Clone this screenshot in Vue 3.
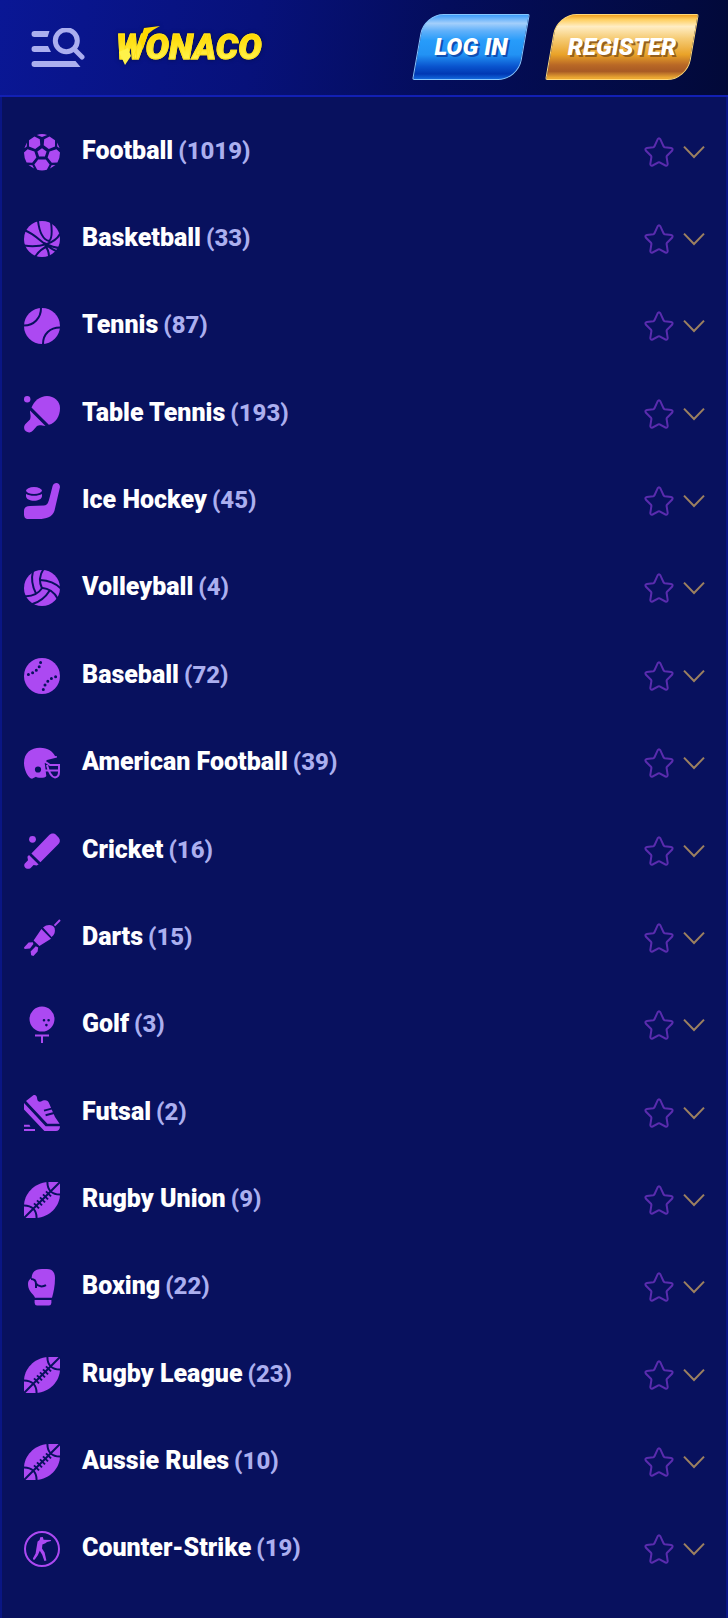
<script setup>
import { ref } from 'vue'

const sports = ref([
  { name: 'Football', count: 1019, icon: 'football', favourite: false },
  { name: 'Basketball', count: 33, icon: 'basketball', favourite: false },
  { name: 'Tennis', count: 87, icon: 'tennis', favourite: false },
  { name: 'Table Tennis', count: 193, icon: 'table-tennis', favourite: false },
  { name: 'Ice Hockey', count: 45, icon: 'hockey', favourite: false },
  { name: 'Volleyball', count: 4, icon: 'volleyball', favourite: false },
  { name: 'Baseball', count: 72, icon: 'baseball', favourite: false },
  { name: 'American Football', count: 39, icon: 'helmet', favourite: false },
  { name: 'Cricket', count: 16, icon: 'cricket', favourite: false },
  { name: 'Darts', count: 15, icon: 'darts', favourite: false },
  { name: 'Golf', count: 3, icon: 'golf', favourite: false },
  { name: 'Futsal', count: 2, icon: 'futsal', favourite: false },
  { name: 'Rugby Union', count: 9, icon: 'rugby', favourite: false },
  { name: 'Boxing', count: 22, icon: 'boxing', favourite: false },
  { name: 'Rugby League', count: 23, icon: 'rugby', favourite: false },
  { name: 'Aussie Rules', count: 10, icon: 'rugby', favourite: false },
  { name: 'Counter-Strike', count: 19, icon: 'counter-strike', favourite: false }
])

const stitches = [11, 14, 17, 20, 23]
</script>

<template>
  <div class="page">
    <header class="header">
      <button class="menu" type="button" aria-label="Menu and search">
        <svg viewBox="0 0 54 40" width="54" height="40" aria-hidden="true">
          <path d="M3.5 3H18.5L16.6 9H3.5A3 3 0 0 1 3.5 3ZM3.5 18H17L20 24H3.5A3 3 0 0 1 3.5 18ZM3.5 33H44.5L49.5 39H3.5A3 3 0 0 1 3.5 33Z" />
          <circle cx="35.3" cy="12.8" r="11" class="lens" />
          <path d="M43.5 21.5L51 29" class="lens handle" />
        </svg>
      </button>
      <a class="logo" href="#">
        <span class="logo-text">WONACO</span>
        <svg class="bolt" viewBox="0 0 46 42" width="46" height="42" aria-hidden="true">
          <path class="bolt-top" d="M27 3L43 1L36 5L31 9L26 24L23 16Z" />
          <path class="bolt-tip" d="M2 27L8 40L14 31L11 23Z" />
        </svg>
      </a>
      <div class="actions">
        <button class="cta login" type="button"><span>LOG IN</span></button>
        <button class="cta register" type="button"><span>REGISTER</span></button>
      </div>
    </header>

    <main class="panel">
      <ul class="list">
        <li v-for="sport in sports" :key="sport.name" class="row">
          <svg class="icon" viewBox="0 0 36 36" width="36" height="36" aria-hidden="true">
            <template v-if="sport.icon === 'football'">
              <path d="M18 14.2L22.6 17.6L20.9 22.6H15.1L13.4 17.6Z" />
              <path d="M5 6.2L10.5 2.4L15.8 5.2L16.3 11.2L11.2 15L5 12.4ZM31 6.2L25.5 2.4L20.2 5.2L19.7 11.2L24.8 15L31 12.4Z" />
              <path d="M3.6 15.2L10.4 17.4L12.4 23.6L8.2 28.8L2.6 28.6Q0 24 0 18.6ZM32.4 15.2L25.6 17.4L23.6 23.6L27.8 28.8L33.4 28.6Q36 24 36 18.6Z" />
              <path d="M14.2 25.6H21.8L25.6 30.6L22.8 35.8Q18 37 13.2 35.8L10.4 30.6Z" />
              <path d="M12.8 1L18 3L23.2 1Q18 -1 12.8 1ZM.4 14.2L2.8 12.6V8.4ZM35.6 14.2L33.2 12.6V8.4ZM4.5 31L8.4 31.2L10 34.4ZM31.5 31L27.6 31.2L26 34.4Z" />
            </template>
            <template v-else-if="sport.icon === 'basketball'">
              <circle cx="18" cy="18" r="18" />
              <path class="cut" d="M14 0C15 8 17 18 25 20C28 18 28 9 27 1M0 9C12 13 19 24 32 30M0 24.6C17 27 31 22 36 13M11 36C14 31 19 27 24 25M21 24.5C24 28 25 31 25 36M36 27C30 27 26 25 20 22" />
            </template>
            <template v-else-if="sport.icon === 'tennis'">
              <circle cx="18" cy="18" r="18" />
              <path class="cut" d="M17 0C17 10 10 17.5 0 17.5M36 19.5C26 19.5 19 26 19 36" />
            </template>
            <template v-else-if="sport.icon === 'table-tennis'">
              <circle cx="3.2" cy="3.2" r="3.2" />
              <path d="M7.5 11.5C10 5 16 0 23 0C30 0 36 5 36 12C36 20 32 27 24.8 28.8Z" />
              <path d="M6 14.5L21.5 30C18 30 16 28.4 13 30L9 34.6A5 5 0 0 1 1.2 28.2L6 23.5C7.4 20 6 18 6 14.5Z" />
            </template>
            <template v-else-if="sport.icon === 'hockey'">
              <path d="M28.6 3C29.8 -1.2 36 -.8 36 4L30.4 28C28.4 34 22 36 15 36H4.5C1 36 0 34 0 31V28C0 25 2 23 6 23L20 22.6C23.4 22 24 20 25 17Z" />
              <ellipse cx="10" cy="7.6" rx="8" ry="3.5" />
              <path d="M2 11C6 13.4 14 13.4 18 11V13C18 19.4 2 19.4 2 13Z" />
            </template>
            <template v-else-if="sport.icon === 'volleyball'">
              <circle cx="18" cy="18" r="18" />
              <path v-for="turn in [0, 120, 240]" :key="turn" class="cut" :transform="`rotate(${turn} 18 18)`" d="M18 18.5C15 12 15.5 5 19.5 -1M12 23.5C8 16 7 9 9 1" />
            </template>
            <template v-else-if="sport.icon === 'baseball'">
              <circle cx="18" cy="18" r="18" />
              <path class="dots" d="M16.6 4.6h.01M15.2 8.8h.01M12.3 12.2h.01M8.6 14.8h.01M4.4 16.6h.01M31.6 18.8h.01M27.4 20.6h.01M23.8 23.2h.01M21 27h.01M19.3 31.6h.01" />
            </template>
            <template v-else-if="sport.icon === 'helmet'">
              <path fill-rule="evenodd" d="M0 18C0 8 7 2.8 16 2.8C24 2.8 29 7 31 11L33 11.2V12.6L23 15Q20 17 21 20L22.3 31C22 33.2 13 33.4 12 31.8L8 33.8C4 33 0 25 0 18ZM14 21.4A3.1 3.1 0 1 0 14 27.6A3.1 3.1 0 1 0 14 21.4Z" />
              <path class="line" d="M20 16L26 20H35V27Q35 32 31 32.4Q26 32 23 20M21 25.5H35" />
            </template>
            <template v-else-if="sport.icon === 'cricket'">
              <circle cx="8.5" cy="6.3" r="3.4" />
              <path d="M7.4 20.4L25 2.2C27 .2 30 -.2 32.2 2L34.6 4.4C36.6 6.8 36.2 9.4 34 11.6L16.4 29.2Z" />
              <path d="M5 22L14.6 31.6L12.6 32.6L9.6 32L6.4 35.2C3 37.2 -1 34.2 .6 30.8L4 27.2L3.4 23.8Z" />
            </template>
            <template v-else-if="sport.icon === 'darts'">
              <path class="line" d="M30.5 5.6L36 0" />
              <path d="M19 7.4C23 3.8 29 4.2 30.6 8C31.6 12 30.4 15 27.6 17ZM17.4 9L27 18.8L15.4 26L9.6 20.6Z" />
              <path d="M0 27.4L4.6 22.4L8.8 22.2L9.4 24L6 28.6L.6 29ZM6.6 31.4L11.8 26.2L14.2 27.6L13.6 31.6L9.4 36L7.2 35.2Z" />
            </template>
            <template v-else-if="sport.icon === 'golf'">
              <path fill-rule="evenodd" d="M18 -.4A12.5 12.5 0 1 0 18 24.6A12.5 12.5 0 1 0 18 -.4ZM20 12A1.3 1.3 0 1 1 20 14.6A1.3 1.3 0 1 1 20 12ZM24.6 12A1.3 1.3 0 1 1 24.6 14.6A1.3 1.3 0 1 1 24.6 12ZM22.4 16.8A1.3 1.3 0 1 1 22.4 19.4A1.3 1.3 0 1 1 22.4 16.8Z" />
              <path class="line" d="M11 28.4H25M18 28.4V36" />
            </template>
            <template v-else-if="sport.icon === 'futsal'">
              <path d="M2 6L9 .6C11.2 -.8 13 1 13.2 4C13.6 7 16 7.4 18.4 5.8C22 4.6 24 5.6 25.2 8.4L27.6 14.2L31 22L35.6 28.8H23.4Z" />
              <path class="cut" d="M20 15.6L28.6 13.4M21.6 20.2L30 18" />
              <path d="M0 8L21.6 31.2H36C36 34.2 34.4 36 32 36H20.4L0 14.4ZM0 29.8H5.4L6.4 31.8H0ZM0 34H11V36H0Z" />
            </template>
            <template v-else-if="sport.icon === 'rugby'">
              <path d="M36 0H24C10 1 0 12 0 24V36H12C26 35 36 24 36 12Z" />
              <path class="cut" d="M0 36L36 0M23.4 0C23.4 8 28 12.6 36 12.6M0 23.4C8 23.4 12.6 28 12.6 36" />
              <path v-for="x in stitches" :key="x" class="cut" :d="`M${x - 1} ${32.4 - x}l5 5`" />
            </template>
            <template v-else-if="sport.icon === 'boxing'">
              <path d="M7.6 9C8 3 11 0 18 0H23C29 0 31 4 31 9C31 17 29.6 23 28 28.8H11C10 26 8 25 6 22C4.4 19.4 4 17 4 14.6C4 12 5.6 10 7.6 9Z" />
              <path class="cut" d="M7 10C11 10 12 12.6 12 15V19M12 14.6C14 18 19 18 22 16.2" />
              <path d="M10.6 31H27.4V34Q27 36.6 25 36.6H13Q11 36.6 10.6 34Z" />
            </template>
            <template v-else>
              <circle cx="18" cy="18" r="17" class="line" />
              <path d="M13.6 10.6L15.6 9L16.2 6.2L18.8 6L19.6 8.8L26.8 9L27 10L23 11L21.4 12.2L18.4 13.6L18 17.4L20.6 21.4L22.4 29.4L20.4 30L18.2 23.8L15.8 19.8L13.8 24.2L10.6 28.8L9 28.6V27.2L11.6 22.6L12.4 17.4Z" />
            </template>
          </svg>
          <a class="name" href="#">{{ sport.name }}<span class="count">({{ sport.count }})</span></a>
          <button class="tool" type="button" :aria-label="`Add ${sport.name} to favourites`" :aria-pressed="sport.favourite" @click="sport.favourite = !sport.favourite">
            <svg viewBox="0 0 30 30" width="30" height="30" aria-hidden="true">
              <path class="star" d="M13.6 2.4Q15 .2 16.4 2.4L19.6 9.4Q20 10 20.7 10.2L27.2 11Q29.6 11.6 28 13.8L23 18.8Q22.5 19.3 22.6 20L23.7 27Q23.6 29.2 21.4 28.5L15.6 25.3Q15 25 14.4 25.3L8.6 28.5Q6.4 29.2 6.3 27L7.4 20Q7.5 19.3 7 18.8L2 13.8Q.4 11.6 2.8 11L9.3 10.2Q10 10 10.4 9.4Z" />
            </svg>
          </button>
          <button class="tool" type="button" :aria-label="`Expand ${sport.name}`">
            <svg viewBox="0 0 22 14" width="22" height="14" aria-hidden="true">
              <path class="chevron" d="M1 1.6L11 12L21 1.6" />
            </svg>
          </button>
        </li>
      </ul>
    </main>
  </div>
</template>

<style>
html {
  background: #08115e;
}
</style>

<style scoped>
.page {
  min-height: 100vh;
  display: flex;
  flex-direction: column;
  box-sizing: border-box;
  font-family: Roboto, "Liberation Sans", sans-serif;
  color: #fff;
}

button {
  border: 0;
  padding: 0;
  background: none;
  font: inherit;
  color: inherit;
  cursor: pointer;
}

a {
  color: inherit;
  text-decoration: none;
}

svg {
  display: block;
}

.header {
  display: flex;
  align-items: center;
  height: 94px;
  padding: 0 35px 1px 31px;
  border-bottom: 2px solid #1220b4;
  background: linear-gradient(100deg, #0a1795 0%, #07117a 35%, #040d5c 60%, #020a40 92%, #020938 100%);
}

.menu {
  padding-top: 1px;
}

.menu svg {
  fill: #abafef;
}

.menu .lens {
  fill: none;
  stroke: #abafef;
  stroke-width: 5;
}

.menu .handle {
  stroke-linecap: round;
}

.logo {
  position: relative;
  margin-left: 31px;
  padding-top: 2px;
  font-size: 35px;
  line-height: 40px;
  font-weight: 900;
  font-style: italic;
  filter: drop-shadow(0 0 2px #030c4c);
}

.logo-text {
  padding-right: 4px;
  background: linear-gradient(to top, #fff450 20%, #ffd800 80%);
  -webkit-background-clip: text;
  background-clip: text;
  -webkit-text-stroke: 1px #ffe21c;
  color: transparent;
}

.bolt {
  position: absolute;
  left: 1px;
  top: -1px;
}

.bolt-top {
  fill: #ffd900;
}

.bolt-tip {
  fill: #fff24a;
}

.actions {
  display: flex;
  gap: 27px;
  margin-left: auto;
}

.cta {
  position: relative;
  height: 66px;
  min-width: 106px;
  font-size: 24px;
  line-height: 28px;
  font-weight: 900;
  font-style: italic;
  white-space: nowrap;
}

.register {
  min-width: 142px;
}

.cta::before {
  content: "";
  position: absolute;
  inset: 0;
  box-sizing: border-box;
  border: 1px solid;
  border-radius: 20px 2px 20px 2px;
  transform: skewX(-10deg);
}

.cta span {
  position: relative;
}

.login {
  text-shadow: 2px 2px 0 #0e4fb4;
}

.login::before {
  border-color: #86c6ff;
  background: linear-gradient(#3d9dfa 0%, #a3cffb 13%, #5fb0fa 25%, #279cfa 40%, #2292f4 62%, #0a55cf 80%, #0038b4 92%, #1267dc 100%);
}

.register {
  text-shadow: 2px 2px 0 #96601c;
}

.register::before {
  border-color: #ffd878;
  background: linear-gradient(#f0a020 0%, #ffcf60 7%, #ffedc4 18%, #f6cd78 36%, #e9a228 62%, #b96826 78%, #a85a24 88%, #eba832 98%);
}

.panel {
  flex: 1;
  padding: 11px 21px 0 22px;
  border: solid #0a1684;
  border-width: 0 2px;
  background: #08115e;
}

.list {
  margin: 0;
  padding: 0;
  list-style: none;
}

.row {
  display: flex;
  align-items: center;
  height: 12vw;
}

.icon {
  flex: none;
  overflow: visible;
  fill: #ac49f2;
}

.icon .cut,
.icon .dots {
  fill: none;
  stroke: #08115e;
  stroke-width: 2;
}

.icon .dots {
  stroke-linecap: round;
  stroke-width: 3;
}

.icon .line {
  fill: none;
  stroke: #ac49f2;
  stroke-width: 2;
}

.name {
  flex: 1;
  margin-left: 22px;
  padding-bottom: 2px;
  font-size: 25px;
  line-height: 32px;
  font-weight: 900;
}

.count {
  margin-left: 5px;
  font-size: 24px;
  font-weight: 800;
  color: #abafef;
}

.tool {
  margin-left: 9px;
}

.star {
  fill: none;
  stroke: #5a2cae;
  stroke-width: 2;
}

.chevron {
  fill: none;
  stroke: #9c8060;
  stroke-width: 2;
}
</style>
